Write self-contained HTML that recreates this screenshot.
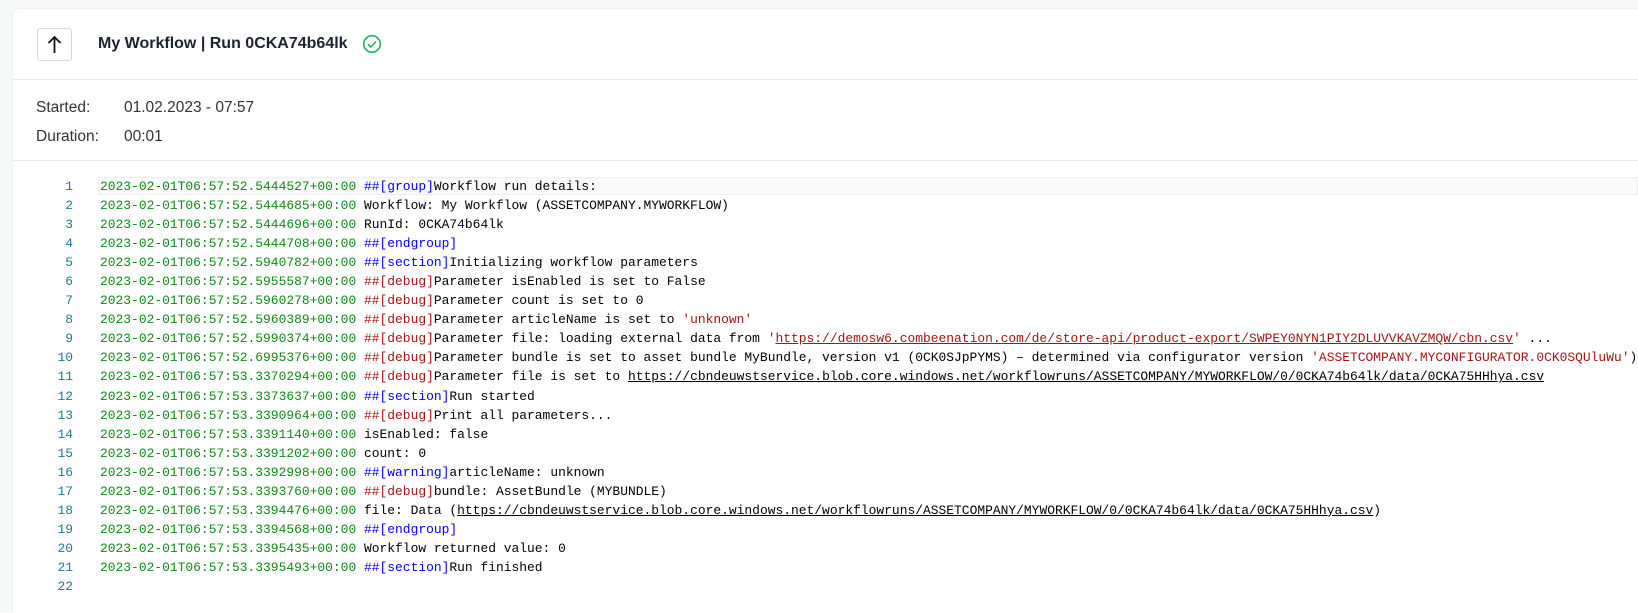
<!DOCTYPE html>
<html><head><meta charset="utf-8"><style>
html,body{margin:0;padding:0;background:#f7f8fa;width:1638px;height:613px;overflow:hidden}
.card{position:absolute;left:12px;top:8px;right:0;bottom:0;background:#fff;border-top-left-radius:8px;border-left:1px solid #eef0f3;border-top:1px solid #eef0f3}
.hdr{height:70px;border-bottom:1px solid #e6e7ea;position:relative}
.btn{position:absolute;left:24px;top:19px;width:33px;height:31px;border:1px solid #d5d7db;border-radius:3px;background:#fff}
.title{position:absolute;left:85px;top:26px;font:bold 16px "Liberation Sans",sans-serif;color:#1b2333}
.chk{position:absolute;left:349px;top:25px}
.info{position:absolute;left:0;right:0;top:71px;height:80px;border-bottom:1px solid #e6e7ea;font:15.5px "Liberation Sans",sans-serif;color:#333}
.info div{position:absolute;left:23px;white-space:nowrap}
.code{position:absolute;top:177px;left:12px;right:0;height:430px;font:12.95px "Liberation Mono",monospace;line-height:19.05px}
.ln{position:absolute;top:0;left:0;width:61px;text-align:right;color:#237893;white-space:pre}
.tx{position:absolute;top:0;left:88px;color:#000;white-space:pre}
.hl{position:absolute;left:86px;right:0;top:0;height:18px;background:#fafafa;border:1px solid #eee;box-sizing:border-box}
.t{color:#0e8a16}
.b{color:#0000ff}
.r{color:#a31515}
.u{text-decoration:underline}
</style></head><body>
<div class="card">
<div class="hdr">
<div class="btn"><svg width="33" height="31" viewBox="0 0 33 31"><path d="M16.5 24V8M10.5 14l6-6 6 6" stroke="#111" stroke-width="1.8" fill="none"/></svg></div>
<div class="title">My Workflow | Run 0CKA74b64lk</div>
<svg class="chk" width="20" height="20" viewBox="0 0 20 20"><circle cx="10" cy="10" r="8.3" stroke="#1fb45a" stroke-width="1.6" fill="none"/><path d="M6 10.2l2.8 2.8 5.3-5.5" stroke="#1fb45a" stroke-width="1.6" fill="none"/></svg>
</div>
<div class="info">
<div style="top:19px">Started:</div><div style="top:19px;left:111px">01.02.2023 - 07:57</div>
<div style="top:48px">Duration:</div><div style="top:48px;left:111px">00:01</div>
</div>
</div>
<div class="code"><div class="hl"></div><div class="ln">1
2
3
4
5
6
7
8
9
10
11
12
13
14
15
16
17
18
19
20
21
22</div><div class="tx"><span class="t">2023-02-01T06:57:52.5444527+00:00</span> <span class="b">##[group]</span>Workflow run details:
<span class="t">2023-02-01T06:57:52.5444685+00:00</span> Workflow: My Workflow (ASSETCOMPANY.MYWORKFLOW)
<span class="t">2023-02-01T06:57:52.5444696+00:00</span> RunId: 0CKA74b64lk
<span class="t">2023-02-01T06:57:52.5444708+00:00</span> <span class="b">##[endgroup]</span>
<span class="t">2023-02-01T06:57:52.5940782+00:00</span> <span class="b">##[section]</span>Initializing workflow parameters
<span class="t">2023-02-01T06:57:52.5955587+00:00</span> <span class="r">##[debug]</span>Parameter isEnabled is set to False
<span class="t">2023-02-01T06:57:52.5960278+00:00</span> <span class="r">##[debug]</span>Parameter count is set to 0
<span class="t">2023-02-01T06:57:52.5960389+00:00</span> <span class="r">##[debug]</span>Parameter articleName is set to <span class="r">'unknown'</span>
<span class="t">2023-02-01T06:57:52.5990374+00:00</span> <span class="r">##[debug]</span>Parameter file: loading external data from <span class="r">'<span class="u">https://demosw6.combeenation.com/de/store-api/product-export/SWPEY0NYN1PIY2DLUVVKAVZMQW/cbn.csv</span>'</span> ...
<span class="t">2023-02-01T06:57:52.6995376+00:00</span> <span class="r">##[debug]</span>Parameter bundle is set to asset bundle MyBundle, version v1 (0CK0SJpPYMS) – determined via configurator version <span class="r">'ASSETCOMPANY.MYCONFIGURATOR.0CK0SQUluWu'</span>)
<span class="t">2023-02-01T06:57:53.3370294+00:00</span> <span class="r">##[debug]</span>Parameter file is set to <span class="u">https://cbndeuwstservice.blob.core.windows.net/workflowruns/ASSETCOMPANY/MYWORKFLOW/0/0CKA74b64lk/data/0CKA75HHhya.csv</span>
<span class="t">2023-02-01T06:57:53.3373637+00:00</span> <span class="b">##[section]</span>Run started
<span class="t">2023-02-01T06:57:53.3390964+00:00</span> <span class="r">##[debug]</span>Print all parameters...
<span class="t">2023-02-01T06:57:53.3391140+00:00</span> isEnabled: false
<span class="t">2023-02-01T06:57:53.3391202+00:00</span> count: 0
<span class="t">2023-02-01T06:57:53.3392998+00:00</span> <span class="b">##[warning]</span>articleName: unknown
<span class="t">2023-02-01T06:57:53.3393760+00:00</span> <span class="r">##[debug]</span>bundle: AssetBundle (MYBUNDLE)
<span class="t">2023-02-01T06:57:53.3394476+00:00</span> file: Data (<span class="u">https://cbndeuwstservice.blob.core.windows.net/workflowruns/ASSETCOMPANY/MYWORKFLOW/0/0CKA74b64lk/data/0CKA75HHhya.csv</span>)
<span class="t">2023-02-01T06:57:53.3394568+00:00</span> <span class="b">##[endgroup]</span>
<span class="t">2023-02-01T06:57:53.3395435+00:00</span> Workflow returned value: 0
<span class="t">2023-02-01T06:57:53.3395493+00:00</span> <span class="b">##[section]</span>Run finished</div></div>
</body></html>
